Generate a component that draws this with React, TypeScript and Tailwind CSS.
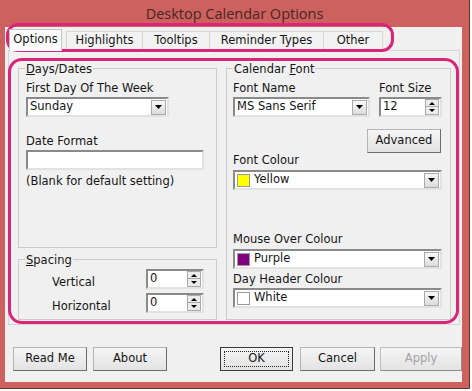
import type { ReactNode } from 'react'

const Arrow = ({ up = false, w = 7, h = 4 }: { up?: boolean; w?: number; h?: number }) => (
  <svg width={w} height={h} viewBox={`0 0 ${w} ${h}`}>
    {up ? (
      <polygon points={`0,${h} ${w},${h} ${w / 2},0`} fill="#000" />
    ) : (
      <polygon points={`0,0 ${w},0 ${w / 2},${h}`} fill="#000" />
    )}
  </svg>
)

// sunken white field used by combos, spins and the text box
const Field = ({ className, children }: { className: string; children?: ReactNode }) => (
  <div
    className={`flex h-[20px] items-center border-2 border-t-[#8a8a8a] border-l-[#8a8a8a] border-b-[#e2e2e2] border-r-[#e2e2e2] bg-white ${className}`}
  >
    {children}
  </div>
)

const Combo = ({ className, children }: { className: string; children?: ReactNode }) => (
  <Field className={className}>
    <div className="flex flex-1 items-center pl-[2px]">{children}</div>
    <div className="mr-[1px] flex h-[15px] w-[15px] items-center justify-center border border-[#a9a9a9] bg-gradient-to-b from-[#f7f7f7] to-[#dcdcdc]">
      <Arrow />
    </div>
  </Field>
)

const Spin = ({ className, value }: { className: string; value: string }) => (
  <Field className={className}>
    <div className="flex-1 pl-[2px]">{value}</div>
    <div className="mr-[1px] flex h-[16px] w-[14px] flex-col">
      <div className="flex h-[8px] items-center justify-center border border-[#a9a9a9] bg-[#ececec]">
        <Arrow up w={6} h={3} />
      </div>
      <div className="flex h-[8px] items-center justify-center border border-t-0 border-[#a9a9a9] bg-[#ececec]">
        <Arrow w={6} h={3} />
      </div>
    </div>
  </Field>
)

const Swatch = ({ color }: { color: string }) => (
  <div className={`mr-[4px] h-[13px] w-[13px] border border-[#9a9a9a] ${color}`} />
)

const Button = ({
  className,
  children,
  isDefault = false,
  disabled = false,
}: {
  className: string
  children: ReactNode
  isDefault?: boolean
  disabled?: boolean
}) => (
  <div
    className={`flex h-[24px] items-center justify-center border bg-gradient-to-b from-[#f5f5f5] to-[#e3e3e3] ${
      isDefault
        ? 'border-[#3a3a3a]'
        : disabled
          ? 'border-[#bdbdbd] border-b-[#8c8c8c] border-r-[#8c8c8c] text-[#a3a3a3]'
          : 'border-[#b4b4b4] border-b-[#6c6c6c] border-r-[#6c6c6c]'
    } ${className}`}
  >
    {isDefault ? (
      <div className="flex h-[16px] w-[65px] items-center justify-center border border-dotted border-[#222]">
        {children}
      </div>
    ) : (
      children
    )}
  </div>
)

const Legend = ({ children }: { children: ReactNode }) => (
  <div className="-mt-[7px] ml-[6px] w-fit bg-[#f0f0f0] px-[1px] leading-[14px]">{children}</div>
)

const Label = ({ children, className = '' }: { children: ReactNode; className?: string }) => (
  <div className={`leading-[14px] ${className}`}>{children}</div>
)

export default function App() {
  return (
    <div className="relative h-[391px] w-[472px] bg-white font-['DejaVu_Sans',sans-serif] text-[11.5px] text-[#151515]">
      <div className="flex h-[389px] w-[470px] flex-col border-r border-b border-[#6a3432] bg-[#cd615d]">
        {/* title bar */}
        <div className="flex h-[27px] items-center justify-center pt-[1px] font-['Open_Sans',sans-serif] text-[14.5px] text-[#462626]">
          Desktop Calendar Options
        </div>

        {/* client area */}
        <div className="ml-[5px] flex h-[355px] w-[457px] flex-col bg-[#f0f0f0]">
          {/* tabs */}
          <div className="ml-[4px] mt-[2px] flex h-[21px] items-end">
            <div className="relative z-10 -mb-px flex h-[22px] w-[53px] items-center justify-center border border-b-0 border-[#c4c4c4] bg-[#fbfbfb] pb-[1px]">
              Options
            </div>
            <div className="ml-[4px] flex h-[19px] w-[77px] items-center justify-center border border-b-0 border-[#d6d6d6] bg-[#f2f2f2]">
              Highlights
            </div>
            <div className="flex h-[19px] w-[67px] items-center justify-center border border-b-0 border-l-0 border-[#d6d6d6] bg-[#f2f2f2]">
              Tooltips
            </div>
            <div className="flex h-[19px] w-[114px] items-center justify-center border border-b-0 border-l-0 border-[#d6d6d6] bg-[#f2f2f2]">
              Reminder Types
            </div>
            <div className="flex h-[19px] w-[59px] items-center justify-center border border-b-0 border-l-0 border-[#d6d6d6] bg-[#f2f2f2]">
              Other
            </div>
          </div>

          {/* tab page */}
          <div className="ml-[3px] h-[275px] w-[452px] border border-[#d6d6d6] pl-[9px] pt-[17px]">
            <div className="flex gap-[9px]">
              <div className="flex w-[199px] flex-col gap-[11px]">
                {/* Days/Dates */}
                <div className="flex h-[180px] flex-col border border-[#cccccc]">
                  <Legend>
                    <span className="underline">D</span>ays/Dates
                  </Legend>
                  <div className="flex flex-col pl-[7px]">
                    <Label className="mt-[5px]">First Day Of The Week</Label>
                    <Combo className="mt-[2px] w-[143px]">Sunday</Combo>
                    <Label className="mt-[17px]">Date Format</Label>
                    <Field className="mt-[2px] w-[178px]" />
                    <Label className="mt-[4px]">(Blank for default setting)</Label>
                  </div>
                </div>

                {/* Spacing */}
                <div className="flex h-[61px] flex-col border border-[#cccccc]">
                  <Legend>
                    <span className="underline">S</span>pacing
                  </Legend>
                  <div className="mt-[2px] flex flex-col gap-[4px] pl-[33px]">
                    <div className="flex h-[20px]">
                      <div className="w-[94px] pt-[6px] leading-[14px]">Vertical</div>
                      <Spin className="w-[58px]" value="0" />
                    </div>
                    <div className="flex h-[20px]">
                      <div className="w-[94px] pt-[6px] leading-[14px]">Horizontal</div>
                      <Spin className="w-[58px]" value="0" />
                    </div>
                  </div>
                </div>
              </div>

              {/* Calendar Font */}
              <div className="flex h-[252px] w-[225px] flex-col border border-[#cccccc]">
                <Legend>
                  Calendar <span className="underline">F</span>ont
                </Legend>
                <div className="flex flex-col pl-[6px]">
                  <div className="mt-[5px] flex">
                    <div className="flex w-[137px] flex-col">
                      <Label>Font Name</Label>
                      <Combo className="mt-[2px] w-[137px]">MS Sans Serif</Combo>
                    </div>
                    <div className="ml-[9px] flex w-[63px] flex-col">
                      <Label>Font Size</Label>
                      <Spin className="mt-[2px] w-[63px]" value="12" />
                    </div>
                  </div>
                  <Button className="ml-[134px] mt-[12px] h-[23px] w-[74px]">Advanced</Button>
                  <Label>Font Colour</Label>
                  <Combo className="mt-[3px] w-[209px]">
                    <Swatch color="bg-[#ffff00]" />
                    Yellow
                  </Combo>
                  <Label className="mt-[42px]">Mouse Over Colour</Label>
                  <Combo className="mt-[3px] w-[209px]">
                    <Swatch color="bg-[#800080]" />
                    Purple
                  </Combo>
                  <Label className="mt-[3px]">Day Header Colour</Label>
                  <Combo className="mt-[2px] w-[209px]">
                    <Swatch color="bg-white" />
                    White
                  </Combo>
                </div>
              </div>
            </div>
          </div>

          {/* dialog buttons */}
          <div className="mt-[22px] flex">
            <Button className="ml-[8px] w-[74px]">Read Me</Button>
            <Button className="ml-[6px] w-[74px]">About</Button>
            <Button className="ml-[53px] w-[73px]" isDefault>
              OK
            </Button>
            <Button className="ml-[7px] w-[75px]">Cancel</Button>
            <Button className="ml-[5px] w-[82px]" disabled>
              Apply
            </Button>
          </div>
        </div>
      </div>

      {/* highlight marks drawn over the dialog */}
      <div className="pointer-events-none absolute left-[6px] top-[23px] h-[29px] w-[388px] rounded-[12px] border-[3px] border-[#d92678]" />
      <div className="pointer-events-none absolute left-[8px] top-[58px] h-[266px] w-[451px] rounded-[14px] border-[3px] border-[#d92678]" />
    </div>
  )
}
